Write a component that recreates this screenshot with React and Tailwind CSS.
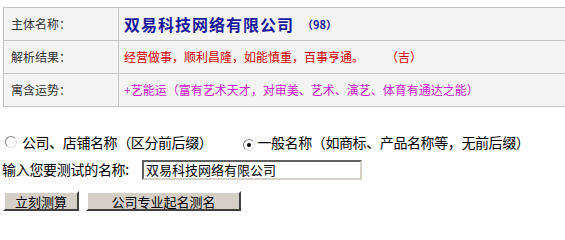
const font = { fontFamily: '"Noto Sans CJK SC", "Liberation Sans", sans-serif' };

function Radio({ checked }) {
  return (
    <span className="inline-flex shrink-0 w-[12px] h-[12px] items-center justify-center rounded-full bg-white border border-t-[#808080] border-l-[#808080] border-b-[#e0e0e0] border-r-[#e0e0e0]">
      {checked && <span className="w-[4px] h-[4px] rounded-full bg-black" />}
    </span>
  );
}

function Row({ label, children }) {
  return (
    <div className="flex h-[33px] border-b border-[#c4c4c4] bg-[#f4f4f4]">
      <div className="w-[115px] shrink-0 flex items-center border-r border-[#c4c4c4] pl-[7px] text-[12px] text-[#333]">
        {label}
      </div>
      <div className="flex items-center pl-[5px] whitespace-nowrap">{children}</div>
    </div>
  );
}

export default function App() {
  return (
    <div className="w-[565px] h-[230px] overflow-hidden bg-white" style={font}>
      {/* result table */}
      <div className="pt-[7px] pl-[3px]">
        <div className="w-[600px] border-t border-l border-[#c4c4c4]">
          <Row label="主体名称：">
            <span className="text-[16px] font-bold text-[#1a1a9a] tracking-[1px]">双易科技网络有限公司</span>
            <span className="ml-[8px] text-[11px] font-semibold text-[#1a1a9a]">（98）</span>
          </Row>
          <Row label="解析结果：">
            <span className="text-[12px] text-[#d00000]">经营做事，顺利昌隆，如能慎重，百事亨通。</span>
            <span className="ml-[22px] text-[12px] text-[#d00000]">（吉）</span>
          </Row>
          <Row label="寓含运势：">
            <span className="text-[12px] text-[#cc22cc]">+艺能运（富有艺术天才，对审美、艺术、演艺、体育有通达之能）</span>
          </Row>
        </div>
      </div>

      {/* form */}
      <div className="mt-[25px] pl-[5px] flex items-center text-[14px] text-black leading-[18px] tracking-[-0.4px] whitespace-nowrap">
        <Radio />
        <span className="ml-[5px]">公司、店铺名称（区分前后缀）</span>
        <span className="ml-[31px]"><Radio checked /></span>
        <span className="ml-[2px]">一般名称（如商标、产品名称等，无前后缀）</span>
      </div>

      <div className="mt-[8px] pl-[2px] flex items-center text-[14px] text-black">
        <span className="w-[140px] tracking-[-0.3px]">输入您要测试的名称:</span>
        <div className="w-[220px] h-[20px] flex items-center bg-white border-2 border-t-[#606060] border-l-[#606060] border-b-[#d4d0c8] border-r-[#d4d0c8] pl-[2px] text-[13px]">
          双易科技网络有限公司
        </div>
      </div>

      <div className="mt-[11px] pl-[3px] flex gap-[7px] text-[13px] text-black">
        <button className="w-[76px] h-[20px] bg-[#d4d0c8] border-2 border-t-white border-l-white border-b-[#404040] border-r-[#404040] leading-none">
          立刻测算
        </button>
        <button className="w-[155px] h-[20px] bg-[#d4d0c8] border-2 border-t-white border-l-white border-b-[#404040] border-r-[#404040] leading-none">
          公司专业起名测名
        </button>
      </div>
    </div>
  );
}
